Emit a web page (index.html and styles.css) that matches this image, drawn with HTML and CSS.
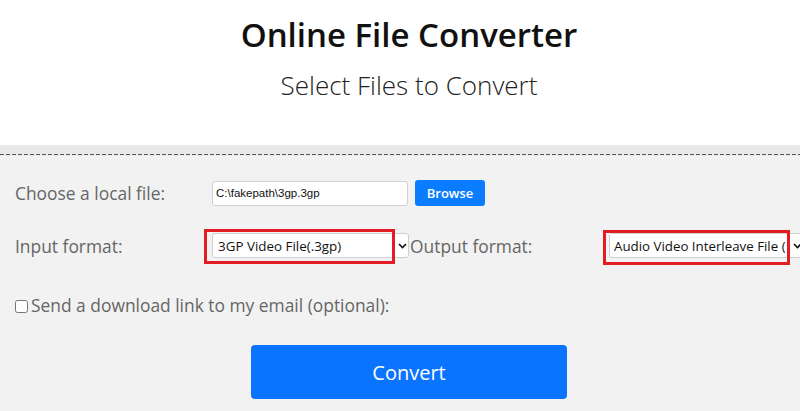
FILE: index.html
```html
<!DOCTYPE html>
<html lang="en">
<head>
<meta charset="utf-8">
<title>Online File Converter</title>
<link rel="stylesheet" href="styles.css">
</head>
<body>
<header class="hero">
  <h1 class="title">Online File Converter</h1>
  <h2 class="subtitle">Select Files to Convert</h2>
</header>
<section class="panel">
  <div class="panel-top"></div>
  <div class="dash"></div>
  <form class="form">
    <div class="row row-file">
      <label class="label label-col">Choose a local file:</label>
      <input class="file-text" type="text" value="C:\fakepath\3gp.3gp" readonly>
      <button class="browse" type="button">Browse</button>
    </div>
    <div class="row row-format">
      <label class="label label-col">Input format:</label>
      <div class="select-wrap">
        <select class="select"><option>3GP Video File(.3gp)</option></select>
        <svg class="chev" width="9" height="6" viewBox="0 0 9 6"><path d="M1 1 L4.5 4.5 L8 1" fill="none" stroke="#111" stroke-width="1.6"/></svg>
        <span class="highlight hl-in"></span>
      </div>
      <label class="label label-out">Output format:</label>
      <div class="select-wrap">
        <select class="select select-out"><option>Audio Video Interleave File (.avi)</option></select>
        <svg class="chev chev-out" width="9" height="6" viewBox="0 0 9 6"><path d="M1 1 L4.5 4.5 L8 1" fill="none" stroke="#111" stroke-width="1.6"/></svg>
        <span class="highlight hl-out"></span>
      </div>
    </div>
    <div class="row row-email">
      <input class="check" type="checkbox" id="em">
      <label class="label email-label" for="em">Send a download link to my email (optional):</label>
    </div>
    <div class="actions">
      <button class="convert" type="button">Convert</button>
    </div>
  </form>
</section>
</body>
</html>
```
FILE: styles.css
```css
html, body {
  margin: 0;
  padding: 0;
  background: #f2f2f2;
  overflow: hidden;
}
body {
  width: 800px;
  height: 411px;
  font-family: "Open Sans", "Liberation Sans", sans-serif;
}
.hero {
  background: #ffffff;
  height: 145px;
  padding-left: 18px;
  box-sizing: border-box;
  text-align: center;
  padding-top: 13px;
}
.title {
  margin: 0;
  font-size: 33px;
  font-weight: 600;
  color: #111;
  line-height: 44px;
}
.subtitle {
  margin: 10px 0 0 0;
  font-size: 26px;
  font-weight: 300;
  color: #222;
  line-height: 36px;
}
.panel-top {
  height: 9px;
  background: #e9e9e9;
}
.dash {
  height: 1px;
  background: repeating-linear-gradient(90deg, #555 0 4px, transparent 4px 6px);
}
.dash + .form { border-top: 1px solid #ececec; }
.form {
  padding: 24px 0 0 15px;
}
.row {
  display: flex;
  align-items: center;
}
.label {
  font-size: 17.4px;
  color: #666;
  white-space: nowrap;
}
.label-col {
  width: 197px;
  flex: none;
}
.row-file {
  height: 26px;
}
.file-text {
  width: 196px;
  height: 25px;
  box-sizing: border-box;
  border: 1px solid #cfcfcf;
  border-radius: 3px;
  background: #fff;
  padding: 0 3px;
  font-family: "Liberation Sans", Arial, sans-serif;
  font-size: 11.5px;
  color: #111;
  outline: none;
  margin: 0;
}
.browse {
  margin-left: 7px;
  width: 70px;
  height: 26px;
  border: none;
  border-radius: 3px;
  background: #0a7cff;
  color: #fff;
  font-family: "Open Sans", sans-serif;
  font-weight: 600;
  font-size: 13px;
  padding: 0;
}
.row-format {
  margin-top: 27px;
  height: 25px;
}
.select-wrap {
  position: relative;
  width: 197px;
  height: 25px;
  flex: none;
}
.select {
  appearance: none;
  -webkit-appearance: none;
  width: 197px;
  height: 25px;
  box-sizing: border-box;
  border: 1px solid #cfcfcf;
  border-radius: 3px;
  background: #fff;
  font-family: "Open Sans", sans-serif;
  font-size: 13.4px;
  color: #111;
  padding: 0 18px 0 5px;
  margin: 0;
}
.select-out {
  font-size: 13.3px;
  padding: 0 20px 0 4px;
}
.chev {
  position: absolute;
  left: 186px;
  top: 10px;
}
.chev-out { left: 184px; }
.highlight {
  position: absolute;
  border: 3px solid #e31b23;
  box-sizing: border-box;
  pointer-events: none;
}
.hl-in {
  left: -8px;
  top: -4px;
  width: 191px;
  height: 35px;
}
.hl-out {
  left: -6px;
  top: -3px;
  width: 187px;
  height: 35px;
}
.label-out {
  margin-left: 1px;
  width: 199px;
  flex: none;
}
.row-email {
  margin-top: 36px;
  height: 22px;
}
.check {
  margin: 2px 3px 0 0;
  width: 13px;
  height: 13px;
}
.actions {
  display: flex;
  justify-content: center;
  padding-left: 3px;
  margin-top: 29px;
}
.convert {
  width: 316px;
  height: 54px;
  border: none;
  border-radius: 4px;
  background: #0a74ff;
  color: #fff;
  font-family: "Open Sans", sans-serif;
  font-size: 20px;
  padding: 0;
}
```
